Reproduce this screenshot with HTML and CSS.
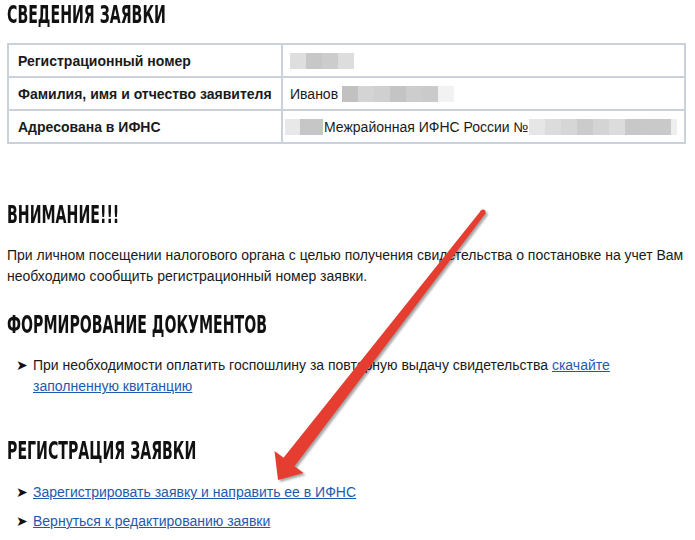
FILE: index.html
```html
<!DOCTYPE html>
<html lang="ru">
<head>
  <meta charset="UTF-8" />
  <title>Сведения заявки</title>
  <link rel="stylesheet" href="styles.css">
</head>
<body>
  <div class="page">
    <h2 class="first"><span>Сведения заявки</span></h2>
    <table class="info">
      <tr>
        <th>Регистрационный номер</th>
        <td><span class="blur blur-num"></span></td>
      </tr>
      <tr>
        <th>Фамилия, имя и отчество заявителя</th>
        <td>Иванов <span class="blur blur-name"></span></td>
      </tr>
      <tr>
        <th>Адресована в ИФНС</th>
        <td class="ifns"><span class="blur blur-code"></span>Межрайонная ИФНС России №<span class="blur blur-tail"></span></td>
      </tr>
    </table>

    <h2 class="attention"><span>Внимание!!!</span></h2>
    <p>При личном посещении налогового органа с целью получения свидетельства о постановке на учет Вам необходимо сообщить регистрационный номер заявки.</p>

    <h2><span>Формирование документов</span></h2>
    <ul class="actions">
      <li>При необходимости оплатить госпошлину за повторную выдачу свидетельства <a href="#">скачайте заполненную квитанцию</a></li>
    </ul>

    <h2><span>Регистрация заявки</span></h2>
    <ul class="actions last">
      <li><a href="#">Зарегистрировать заявку и направить ее в ИФНС</a></li>
      <li><a href="#">Вернуться к редактированию заявки</a></li>
    </ul>
  </div>

  <!-- стрелка-пометка поверх страницы -->
  <svg class="pointer" width="695" height="540" viewBox="0 0 695 540">
    <polygon points="481,210.5 485.5,213.5 294.5,466.2 303.5,473 278,480 274.5,451 283.5,457.8" />
    <circle cx="483" cy="212" r="2.6" />
  </svg>
</body>
</html>
```

FILE: styles.css
```css
body {
  margin: 0;
  background-color: #ffffff;
  font-family: 'Liberation Sans', Arial, sans-serif;
  font-size: 14px;
  color: #1a1a1a;
  overflow: hidden;
}

.page {
  padding: 0 9px 0 7px;
}

h2 {
  font-family: 'DejaVu Sans', sans-serif;
  font-weight: bold;
  font-size: 24px;
  line-height: 28px;
  text-transform: uppercase;
  color: #111111;
  margin: 1px 0 16px;
  white-space: nowrap;
}

/* заголовки сайта набраны узким шрифтом */
h2 span {
  display: inline-block;
  transform: scaleX(0.59);
  transform-origin: left center;
}

h2.first {
  margin-bottom: 14px;
}

h2.attention {
  margin-top: 57px;
}

.info {
  width: 100%;
  border-collapse: collapse;
  border: 2px solid #c9d1da;
}

.info th,
.info td {
  border: 2px solid #c9d1da;
  height: 31px;
  padding: 0 7px;
  text-align: left;
  vertical-align: middle;
  white-space: nowrap;
}

.info th {
  width: 256px;
  padding-left: 9px;
  font-weight: bold;
}

.info td.ifns {
  padding: 0;
}

.blur {
  display: inline-block;
  height: 16px;
  vertical-align: -3px;
}

.blur-num {
  width: 64px;
  background: linear-gradient(to right, #dedede 0 16px, #c7c7c7 16px 32px, #cccccc 32px 48px, #dddddd 48px);
}

.blur-name {
  width: 112px;
  background: linear-gradient(to right, #c1c1c1 0 16px, #d4d4d4 16px 32px, #d0d0d0 32px 48px, #c4c4c4 48px 64px, #cdcdcd 64px 80px, #cacaca 80px 96px, #f2f2f2 96px);
}

.blur-code {
  width: 40px;
  margin-right: 1px;
  background: linear-gradient(to right, #ffffff 0 2px, #e8e8e8 2px 17px, #c6c6c6 17px);
}

.blur-tail {
  width: 148px;
  background: linear-gradient(to right, #e6e6e6 0 16px, #dcdcdc 16px 32px, #d6d6d6 32px 48px, #cbcbcb 48px 64px, #d4d4d4 64px 80px, #dcdcdc 80px 96px, #c8c8c8 96px 112px, #c9c9c9 112px 142px, #eeeeee 142px);
}

p {
  margin: 0 0 24px;
  line-height: 21px;
}

.actions {
  list-style: none;
  margin: 0 0 40px;
  padding: 0 0 0 26px;
}

.actions.last {
  margin-top: 17px;
}

.actions li {
  position: relative;
  line-height: 21px;
  margin-bottom: 8px;
}

.actions li::before {
  content: "\27A4";
  position: absolute;
  left: -17px;
  top: 0;
  font-family: 'DejaVu Sans', sans-serif;
  font-size: 14px;
  color: #111111;
}

a {
  color: #1d5aae;
  text-decoration: underline;
}

.pointer {
  position: absolute;
  top: 0;
  left: 0;
  pointer-events: none;
  fill: #e53e31;
  filter: drop-shadow(2px 2px 1px rgba(0, 0, 0, 0.35));
}
```
